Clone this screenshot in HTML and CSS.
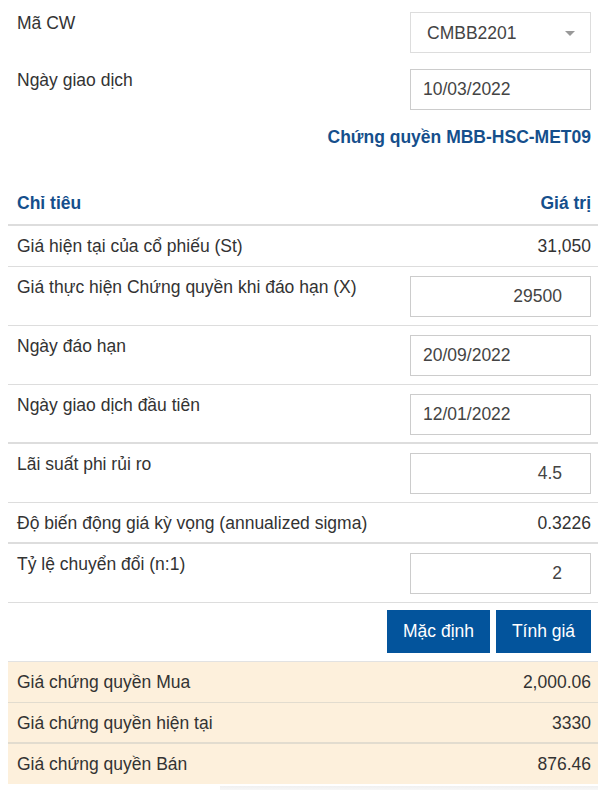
FILE: index.html
```html
<!DOCTYPE html>
<html lang="vi">
<head>
    <meta charset="UTF-8">
    <meta name="viewport" content="width=device-width, initial-scale=1.0">
    <title>Tính giá chứng quyền</title>
    <link rel="stylesheet" href="styles.css">
</head>
<body>
    <div class="calc">
        <div class="top-row">
            <label for="cwCode">Mã CW</label>
            <div class="select-wrap">
                <select id="cwCode">
                    <option>CMBB2201</option>
                </select>
                <span class="caret"></span>
            </div>
        </div>
        <div class="top-row">
            <label for="tradeDate">Ngày giao dịch</label>
            <input type="text" id="tradeDate" class="field" value="10/03/2022">
        </div>
        <h3 class="cw-title">Chứng quyền MBB-HSC-MET09</h3>

        <div class="grid">
            <div class="row head">
                <span>Chỉ tiêu</span>
                <span>Giá trị</span>
            </div>
            <div class="row">
                <span>Giá hiện tại của cổ phiếu (St)</span>
                <span>31,050</span>
            </div>
            <div class="row with-input">
                <span>Giá thực hiện Chứng quyền khi đáo hạn (X)</span>
                <input type="text" class="field num" value="29500">
            </div>
            <div class="row with-input">
                <span>Ngày đáo hạn</span>
                <input type="text" class="field" value="20/09/2022">
            </div>
            <div class="row with-input thick">
                <span>Ngày giao dịch đầu tiên</span>
                <input type="text" class="field" value="12/01/2022">
            </div>
            <div class="row with-input">
                <span>Lãi suất phi rủi ro</span>
                <input type="text" class="field num" value="4.5">
            </div>
            <div class="row thick">
                <span>Độ biến động giá kỳ vọng (annualized sigma)</span>
                <span>0.3226</span>
            </div>
            <div class="row with-input">
                <span>Tỷ lệ chuyển đổi (n:1)</span>
                <input type="text" class="field num" value="2">
            </div>
        </div>

        <div class="actions">
            <button type="button">Mặc định</button>
            <button type="button">Tính giá</button>
        </div>

        <div class="grid results">
            <div class="row">
                <span>Giá chứng quyền Mua</span>
                <span>2,000.06</span>
            </div>
            <div class="row thick">
                <span>Giá chứng quyền hiện tại</span>
                <span>3330</span>
            </div>
            <div class="row">
                <span>Giá chứng quyền Bán</span>
                <span>876.46</span>
            </div>
        </div>
        <div class="next-panel"></div>
    </div>
</body>
</html>
```

FILE: styles.css
```css
body {
    margin: 8px;
    font-family: "Liberation Sans", Arial, sans-serif;
    font-size: 17.5px;
    line-height: 22px;
    color: #333;
    background: #fff;
}

.calc {
    padding-top: 4px;
}

/* --- top selectors --- */
.top-row {
    display: flex;
    justify-content: space-between;
    align-items: flex-start;
    padding: 0 7px 0 9px;
    margin-bottom: 16px;
}
.select-wrap {
    position: relative;
    width: 181px;
    height: 41px;
}
.select-wrap select {
    appearance: none;
    -webkit-appearance: none;
    box-sizing: border-box;
    width: 100%;
    height: 41px;
    padding: 0 30px 0 16px;
    border: 1px solid #ddd;
    border-radius: 0;
    background: #fff;
    font-family: inherit;
    font-size: 17.5px;
    color: #444;
}
.caret {
    position: absolute;
    right: 16px;
    top: 19px;
    width: 0;
    height: 0;
    border-left: 5px solid transparent;
    border-right: 5px solid transparent;
    border-top: 5px solid #999;
    pointer-events: none;
}
.field {
    box-sizing: border-box;
    width: 181px;
    height: 41px;
    padding: 0 12px;
    border: 1px solid #ccc;
    border-radius: 0;
    font-family: inherit;
    font-size: 17.5px;
    color: #444;
    background: #fff;
}
.field.num {
    text-align: right;
    padding-right: 28px;
}

.cw-title {
    margin: 0 0 37px;
    padding-right: 7px;
    text-align: right;
    font-size: 17.5px;
    line-height: 22px;
    font-weight: bold;
    color: #154f8c;
}

/* --- table rows --- */
.grid {
    display: flex;
    flex-direction: column;
}
.row {
    display: flex;
    justify-content: space-between;
    align-items: flex-start;
    padding: 9px 7px 9px 9px;
    border-bottom: 1px solid #ddd;
}
.row.thick {
    border-bottom-width: 2px;
    padding-bottom: 8px;
}
.row.with-input {
    padding-top: 9px;
    padding-bottom: 8px;
}
.row.with-input.thick {
    padding-bottom: 7px;
}
.row.head {
    padding-top: 7px;
    padding-bottom: 10px;
    border-bottom: 2px solid #ddd;
    font-weight: bold;
    color: #154f8c;
}

.actions {
    display: flex;
    justify-content: flex-end;
    gap: 6px;
    padding: 7px 7px 8px 0;
}
.actions button {
    height: 43px;
    padding: 0;
    border: none;
    border-radius: 0;
    background: #03549c;
    color: #fff;
    font-family: inherit;
    font-size: 17.5px;
    white-space: nowrap;
    cursor: pointer;
}
.actions button:first-child {
    width: 103px;
}
.actions button:last-child {
    width: 95px;
}

.results {
    background: #fdf0dc;
    border-top: 1px solid #e2e2e2;
}
.results .row {
    border-bottom-color: #e2dccf;
}
.results .row:last-child {
    border-bottom: none;
}

.next-panel {
    height: 6px;
    margin: 2px 0 0 212px;
    background: linear-gradient(#f0f0f0, #fafafa);
}
```
